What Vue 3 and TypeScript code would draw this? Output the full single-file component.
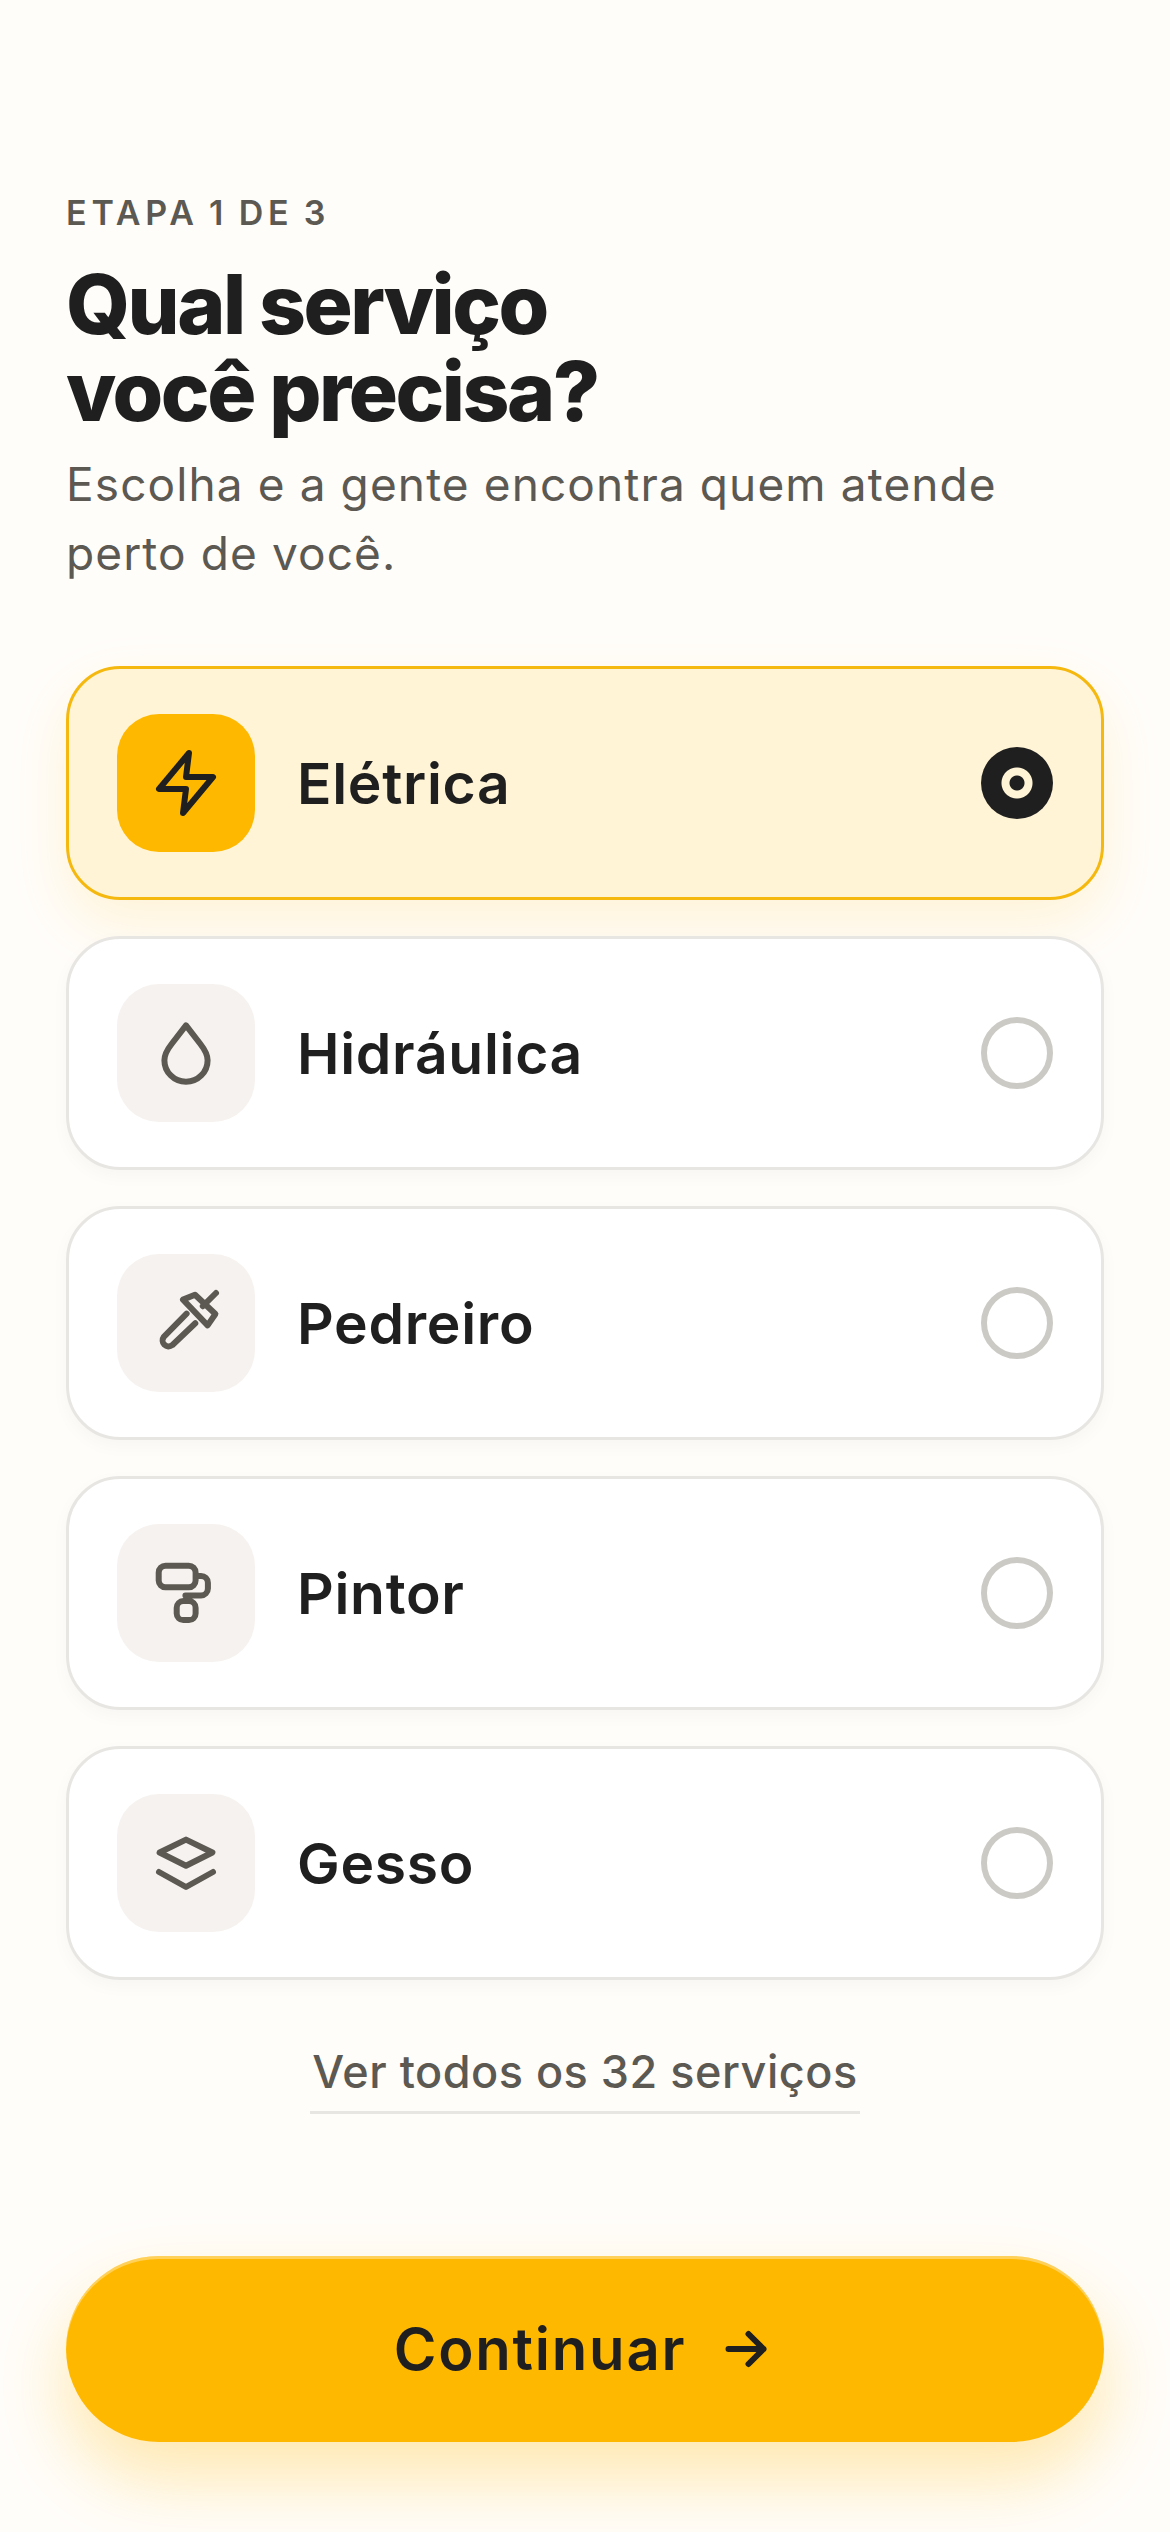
<template>
  <main class="screen">
    <header class="intro">
      <p class="step">ETAPA 1 DE 3</p>
      <h1>Qual serviço<br />você precisa?</h1>
      <p class="lead">Escolha e a gente encontra quem atende perto de você.</p>
    </header>

    <ul class="services">
      <li
        v-for="service in services"
        :key="service.name"
        class="service"
        :class="{ selected: service.name === selected }"
        @click="selected = service.name"
      >
        <span class="tile">
          <svg viewBox="0 0 24 24" width="72" height="72" fill="none" stroke="currentColor" stroke-width="2" stroke-linecap="round" stroke-linejoin="round">
            <path :d="service.icon" />
          </svg>
        </span>
        <span class="name">{{ service.name }}</span>
        <span class="radio"></span>
      </li>
    </ul>

    <div class="more"><a href="#">Ver todos os 32 serviços</a></div>

    <button class="next" type="button">
      <span>Continuar</span>
      <svg viewBox="0 0 24 24" width="60" height="60" fill="none" stroke="currentColor" stroke-width="2.4" stroke-linecap="round" stroke-linejoin="round">
        <path d="M5 12h14M13 6l6 6-6 6" />
      </svg>
    </button>
  </main>
</template>

<script setup lang="ts">
import { ref } from 'vue';

interface Service {
  name: string;
  icon: string;
}

const services: Service[] = [
  { name: 'Elétrica', icon: 'M13 2 3 14h9l-1 8 10-12h-9l1-8z' },
  { name: 'Hidráulica', icon: 'M12 2.8 16.8 9c1.4 1.8 2.4 3.4 2.4 5.4a7.2 7.2 0 0 1-14.4 0c0-2 1-3.6 2.4-5.4z' },
  { name: 'Pedreiro', icon: 'M11 4.2 15 2.6 21.8 9l-2.6 3.8zM17.6 6.4 22 2M12.2 8.9 4.6 16.6a2 2 0 0 0 2.8 2.8l7.7-7.3' },
  { name: 'Pintor', icon: 'M5.2 2.9h7.7a2.3 2.3 0 0 1 2.3 2.3v2.6a2.3 2.3 0 0 1-2.3 2.3H5.2a2.3 2.3 0 0 1-2.3-2.3V5.2a2.3 2.3 0 0 1 2.3-2.3zM15.4 6.3h1.6a2.3 2.3 0 0 1 2.3 2.3v1.9a2.3 2.3 0 0 1-2.3 2.3h-5.2M11.1 14.7h1.9a2.2 2.2 0 0 1 2.2 2.2v1.9a2.2 2.2 0 0 1-2.2 2.2h-1.9a2.2 2.2 0 0 1-2.2-2.2v-1.9a2.2 2.2 0 0 1 2.2-2.2z' },
  { name: 'Gesso', icon: 'M12 4.2 20.8 8.5 12 12.9 3.2 8.5zM3 15l9 5 9-5' },
];

const selected = ref('Elétrica');
</script>

<style>
html,
body {
  background: #fffdfa;
}
</style>

<style scoped>
.screen {
  box-sizing: border-box;
  width: 1170px;
  height: 2532px;
  overflow: hidden;
  padding: 186px 66px 0;
  background: #fffdfa;
  color: #1f1f1f;
  font-family: Inter, "Noto Sans", sans-serif;
}

.step {
  margin: 0;
  font-size: 34px;
  font-weight: 600;
  line-height: 54px;
  letter-spacing: 4.8px;
  word-spacing: -3px;
  color: #5c5852;
}

h1 {
  margin: 21px 0 0;
  font-size: 82px;
  font-weight: 800;
  line-height: 87px;
  letter-spacing: -2.5px;
}

.lead {
  max-width: 960px;
  margin: 15px 0 0;
  font-size: 46px;
  line-height: 69px;
  letter-spacing: 1.1px;
  color: #5c5852;
}

.services {
  display: flex;
  flex-direction: column;
  gap: 36px;
  margin: 78px 0 0;
  padding: 0;
  list-style: none;
}

.service {
  display: flex;
  align-items: center;
  gap: 42px;
  box-sizing: border-box;
  height: 234px;
  padding: 0 48px;
  border: 3px solid #e8e6e3;
  border-radius: 54px;
  background: #fff;
  box-shadow: 0 6px 18px rgba(0, 0, 0, 0.03);
}

.service.selected {
  border-color: #f5b80f;
  background: #fff4d6;
  box-shadow: 0 24px 60px rgba(255, 184, 0, 0.14);
}

.tile {
  display: flex;
  align-items: center;
  justify-content: center;
  width: 138px;
  height: 138px;
  border-radius: 42px;
  background: #f6f2ef;
  color: #5c5852;
}

.selected .tile {
  background: #ffb800;
  color: #1f1f1f;
}

.name {
  flex: 1;
  font-size: 57px;
  font-weight: 600;
  letter-spacing: 0.7px;
}

.radio {
  box-sizing: border-box;
  width: 72px;
  height: 72px;
  border: 6px solid #cccac5;
  border-radius: 50%;
}

.selected .radio {
  border: 0;
  background: radial-gradient(circle, #1f1f1f 0 7px, #fff4d6 8px 15px, #1f1f1f 16px);
}

.more {
  display: flex;
  justify-content: center;
  margin-top: 62px;
}

.more a {
  padding: 0 2px 9px;
  border-bottom: 3px solid #e8e6e3;
  font-size: 45px;
  font-weight: 500;
  line-height: 60px;
  letter-spacing: 0.5px;
  color: #5c5852;
  text-decoration: none;
}

.next {
  display: flex;
  align-items: center;
  justify-content: center;
  gap: 30px;
  width: 100%;
  height: 186px;
  margin-top: 142px;
  padding: 0;
  border: 0;
  border-radius: 93px;
  background: #ffb800;
  box-shadow: inset 0 3px 0 rgba(255, 255, 255, 0.35), 0 36px 72px rgba(255, 184, 0, 0.3);
  color: #1f1f1f;
  font-family: inherit;
  font-size: 58px;
  font-weight: 600;
  letter-spacing: 1.8px;
}
</style>
